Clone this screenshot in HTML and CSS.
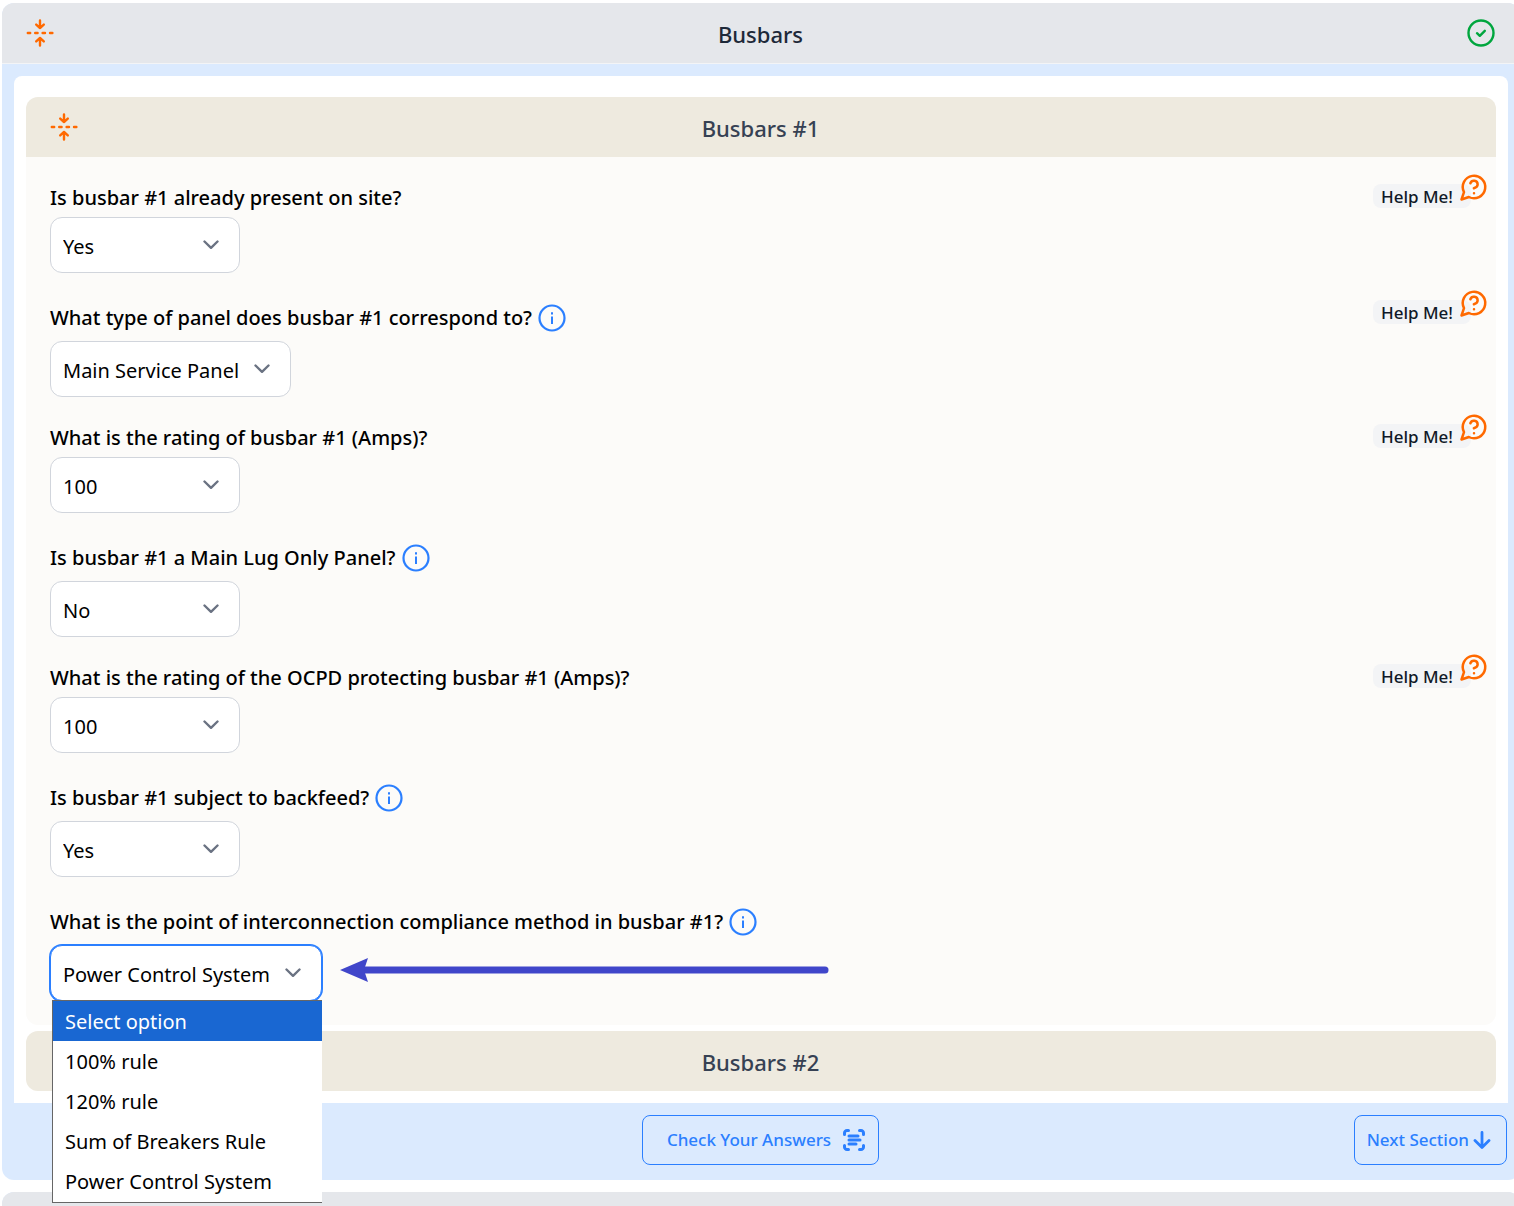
FILE: index.html
```html
<!DOCTYPE html>
<html lang="en">
<head>
  <meta charset="UTF-8">
  <title>Busbars</title>
  <link rel="stylesheet" href="styles.css">
</head>
<body>

  <!-- Shared icons -->
  <svg class="sprite" aria-hidden="true">
    <symbol id="collapse" viewBox="0 0 28 28">
      <path d="M1.800 14h2.400M9.200 14h2.400M16.600 14h2.400M24 14h2.400" />
      <path d="M14 1.500v7.500M10.200 5.600l3.800 3.400 3.800-3.400M14 26.500v-7.500M10.200 22.400l3.800-3.400 3.800 3.400" />
    </symbol>
    <symbol id="info" viewBox="0 0 28 28">
      <circle cx="14" cy="14" r="12.500" />
      <path class="solid" d="M13 12.500h2v7.500h-2zM13 8.300h2v2.200h-2z" />
    </symbol>
    <symbol id="chevron" viewBox="0 0 16 10">
      <path d="M1.500 1.500L8 7.800l6.500-6.300" />
    </symbol>
    <symbol id="help" viewBox="0 0 24 24">
      <path d="M7.900 20A9 9 0 1 0 4 16.100L2 22Z" />
      <path d="M9.090 9a3 3 0 0 1 5.830 1c0 2-3 3-3 3M12 17h.01" />
    </symbol>
  </svg>

  <section class="section">
    <header class="section-header">
      <button class="icon-btn" aria-label="Collapse Busbars"><svg class="icon collapse"><use href="#collapse" /></svg></button>
      <h2>Busbars</h2>
      <svg class="icon check" viewBox="0 0 28 28" role="img" aria-label="Complete">
        <circle cx="14" cy="14" r="12.500" />
        <path d="M10 14.200l2.800 2.600 5-5" />
      </svg>
    </header>

    <div class="section-body">
      <!-- Busbars #1 -->
      <article class="busbar">
        <header class="busbar-header">
          <button class="icon-btn" aria-label="Collapse Busbars #1"><svg class="icon collapse"><use href="#collapse" /></svg></button>
          <h3>Busbars #1</h3>
        </header>

        <form class="questions">
          <div class="question">
            <div class="label-row">
              <label for="present">Is busbar #1 already present on site?</label>
            </div>
            <div class="select">
              <select id="present">
                <option>Select option</option>
                <option selected>Yes</option>
                <option>No</option>
              </select>
              <svg class="icon chevron"><use href="#chevron" /></svg>
            </div>
            <button type="button" class="help">Help Me!<svg class="icon help-icon"><use href="#help" /></svg></button>
          </div>

          <div class="question">
            <div class="label-row has-info">
              <label for="panel">What type of panel does busbar #1 correspond to?</label>
              <svg class="icon info"><use href="#info" /></svg>
            </div>
            <div class="select medium">
              <select id="panel">
                <option>Select option</option>
                <option selected>Main Service Panel</option>
              </select>
              <svg class="icon chevron"><use href="#chevron" /></svg>
            </div>
            <button type="button" class="help">Help Me!<svg class="icon help-icon"><use href="#help" /></svg></button>
          </div>

          <div class="question">
            <div class="label-row">
              <label for="rating">What is the rating of busbar #1 (Amps)?</label>
            </div>
            <div class="select">
              <select id="rating">
                <option>Select option</option>
                <option selected>100</option>
              </select>
              <svg class="icon chevron"><use href="#chevron" /></svg>
            </div>
            <button type="button" class="help">Help Me!<svg class="icon help-icon"><use href="#help" /></svg></button>
          </div>

          <div class="question">
            <div class="label-row has-info">
              <label for="mlo">Is busbar #1 a Main Lug Only Panel?</label>
              <svg class="icon info"><use href="#info" /></svg>
            </div>
            <div class="select">
              <select id="mlo">
                <option>Select option</option>
                <option>Yes</option>
                <option selected>No</option>
              </select>
              <svg class="icon chevron"><use href="#chevron" /></svg>
            </div>
          </div>

          <div class="question">
            <div class="label-row">
              <label for="ocpd">What is the rating of the OCPD protecting busbar #1 (Amps)?</label>
            </div>
            <div class="select">
              <select id="ocpd">
                <option>Select option</option>
                <option selected>100</option>
              </select>
              <svg class="icon chevron"><use href="#chevron" /></svg>
            </div>
            <button type="button" class="help">Help Me!<svg class="icon help-icon"><use href="#help" /></svg></button>
          </div>

          <div class="question">
            <div class="label-row has-info">
              <label for="backfeed">Is busbar #1 subject to backfeed?</label>
              <svg class="icon info"><use href="#info" /></svg>
            </div>
            <div class="select">
              <select id="backfeed">
                <option>Select option</option>
                <option selected>Yes</option>
                <option>No</option>
              </select>
              <svg class="icon chevron"><use href="#chevron" /></svg>
            </div>
          </div>

          <div class="question">
            <div class="label-row has-info">
              <label for="method">What is the point of interconnection compliance method in busbar #1?</label>
              <svg class="icon info"><use href="#info" /></svg>
            </div>
            <div class="pointed">
              <div class="select wide open">
                <select id="method">
                  <option>Select option</option>
                  <option>100% rule</option>
                  <option>120% rule</option>
                  <option>Sum of Breakers Rule</option>
                  <option selected>Power Control System</option>
                </select>
                <svg class="icon chevron"><use href="#chevron" /></svg>
                <ul class="menu" role="listbox" aria-label="Compliance method">
                  <li class="active" role="option">Select option</li>
                  <li role="option">100% rule</li>
                  <li role="option">120% rule</li>
                  <li role="option">Sum of Breakers Rule</li>
                  <li role="option">Power Control System</li>
                </ul>
              </div>
              <svg class="arrow" viewBox="0 0 490 26" aria-hidden="true">
                <path class="shaft" d="M20 13h465" />
                <path class="head" d="M0 13L28 1l-4 12 4 12z" />
              </svg>
            </div>
          </div>
        </form>
      </article>

      <!-- Busbars #2, collapsed -->
      <article class="busbar">
        <header class="busbar-header closed">
          <h3>Busbars #2</h3>
        </header>
      </article>
    </div>

    <footer class="section-footer">
      <button class="btn check-btn">Check Your Answers
        <svg class="icon scan" viewBox="0 0 24 24">
          <path d="M2.500 6.500V5a2.500 2.500 0 0 1 2.500-2.500h1.500M17.500 2.500h1.500A2.500 2.500 0 0 1 21.500 5v1.500M21.500 17.500v1.500a2.500 2.500 0 0 1-2.500 2.500h-1.500M6.500 21.500H5A2.500 2.500 0 0 1 2.500 19v-1.500M7 8h9M7 12h11M7 16h7" />
        </svg>
      </button>
      <button class="btn next-btn">Next Section
        <svg class="icon down" viewBox="0 0 18 18"><path d="M9 1.500v15M2 9.500l7 7 7-7" /></svg>
      </button>
    </footer>
  </section>

  <section class="section">
    <header class="section-header"></header>
  </section>

</body>
</html>
```
FILE: styles.css
```css
* {
  box-sizing: border-box;
}
html {
  overflow: hidden;
}
body {
  margin: 3px -6px 0 2px;
  background: #fff;
  color: #000;
  font-family: "Segoe UI", "Noto Sans", sans-serif;
  font-size: 20px;
  line-height: 28px;
}
h2,
h3 {
  grid-column: 2;
  margin: 0;
  padding-top: 2px;
  font-size: 22px;
  font-weight: 500;
  text-align: center;
}
h2 {
  color: #1e2939;
}
h3 {
  color: #364153;
}
button,
select {
  font: inherit;
}
.sprite {
  display: none;
}
.icon {
  display: block;
  fill: none;
  stroke: currentColor;
  stroke-linecap: round;
  stroke-linejoin: round;
}
.icon-btn {
  padding: 0;
  border: 0;
  background: none;
  color: #ff6900;
}

/* Sections */
.section {
  margin-bottom: 12px;
  border-radius: 12px;
  background: #dbeafe;
}
.section-header,
.busbar-header {
  display: grid;
  grid-template-columns: 28px 1fr 28px;
  align-items: center;
  height: 60px;
  padding: 0 25px 0 24px;
  border-radius: 12px 12px 0 0;
}
.section-header {
  height: 61px;
  border-bottom: 1px solid #f3f4f6;
  background: #e5e7eb;
}
.section-body {
  display: flex;
  flex-direction: column;
  gap: 6px;
  margin: 12px 12px 0;
  padding: 21px 12px 12px;
  border-radius: 8px 8px 0 0;
  background: #fff;
}
.section-footer {
  display: grid;
  grid-template-columns: 1fr auto 1fr;
  padding: 12px 13px 15px 12px;
}

/* Busbar cards */
.busbar {
  border-radius: 12px;
  background: #fcfbf9;
}
.busbar-header {
  background: #eeeadf;
}
.busbar-header.closed {
  border-radius: 12px;
}
.questions {
  display: flex;
  flex-direction: column;
  gap: 26px;
  padding: 26px 24px 24px;
}
.question {
  position: relative;
}
.label-row {
  display: flex;
  align-items: center;
  gap: 6px;
  min-height: 28px;
  margin-bottom: 6px;
  padding-top: 2px;
  font-weight: 500;
  line-height: 26px;
}
.label-row.has-info {
  min-height: 36px;
}

/* Selects */
.select {
  position: relative;
  width: 190px;
}
.select.medium {
  width: 241px;
}
.select.wide {
  width: 272px;
}
select {
  display: block;
  width: 100%;
  height: 56px;
  padding: 4px 40px 0 12px;
  border: 1px solid #d1d5dc;
  border-radius: 12px;
  background: #fff;
  color: #000;
  appearance: none;
}
.open select {
  border-color: #2b7fff;
  box-shadow: 0 0 0 1px #2b7fff;
}
.chevron {
  position: absolute;
  top: 23px;
  right: 21px;
  width: 16px;
  height: 10px;
  color: #6a7282;
  stroke-width: 2.4;
  pointer-events: none;
}
.menu {
  position: absolute;
  z-index: 1;
  top: 55px;
  left: 2px;
  right: 0;
  margin: 0;
  padding: 0 0 1px;
  border: 1px solid #666;
  border-right: 0;
  background: #fff;
  list-style: none;
}
.menu li {
  padding: 2px 12px 0;
  line-height: 38px;
}
.menu .active {
  background: #1967d2;
  color: #fff;
}
.pointed {
  display: flex;
  gap: 18px;
}

/* Help pill with the bubble over its corner */
.help {
  position: absolute;
  top: 1px;
  right: 1px;
  height: 24px;
  padding: 2px 18px 0 8px;
  border: 0;
  border-radius: 8px;
  background: #f3f4f6;
  color: #101828;
  font-size: 17px;
  font-weight: 500;
  line-height: 22px;
}
.help-icon {
  position: absolute;
  top: -12px;
  right: -18px;
  width: 30px;
  height: 30px;
  color: #ff6900;
  stroke-width: 2;
}

.collapse {
  width: 28px;
  height: 28px;
  stroke-width: 2.4;
}
.check {
  width: 28px;
  height: 28px;
  color: #00a63e;
  stroke-width: 2.4;
}
.info {
  width: 28px;
  height: 28px;
  color: #2b7fff;
  stroke-width: 2.2;
}
.solid {
  fill: currentColor;
  stroke: none;
}
.arrow {
  width: 490px;
  height: 26px;
  margin-top: 12px;
}
.shaft {
  stroke: #4046ca;
  stroke-width: 7;
  stroke-linecap: round;
}
.head {
  fill: #4046ca;
}

/* Footer buttons */
.btn {
  display: flex;
  align-items: center;
  height: 50px;
  border: 1px solid #2b7fff;
  border-radius: 8px;
  background: none;
  color: #2b7fff;
  font-size: 17px;
  font-weight: 500;
}
.check-btn {
  grid-column: 2;
  gap: 11px;
  padding: 0 12px 0 24px;
}
.next-btn {
  justify-self: end;
  gap: 4px;
  padding: 0 15px 0 12px;
}
.scan {
  width: 24px;
  height: 24px;
  stroke-width: 3;
}
.down {
  width: 18px;
  height: 18px;
  stroke-width: 2.8;
}
```
